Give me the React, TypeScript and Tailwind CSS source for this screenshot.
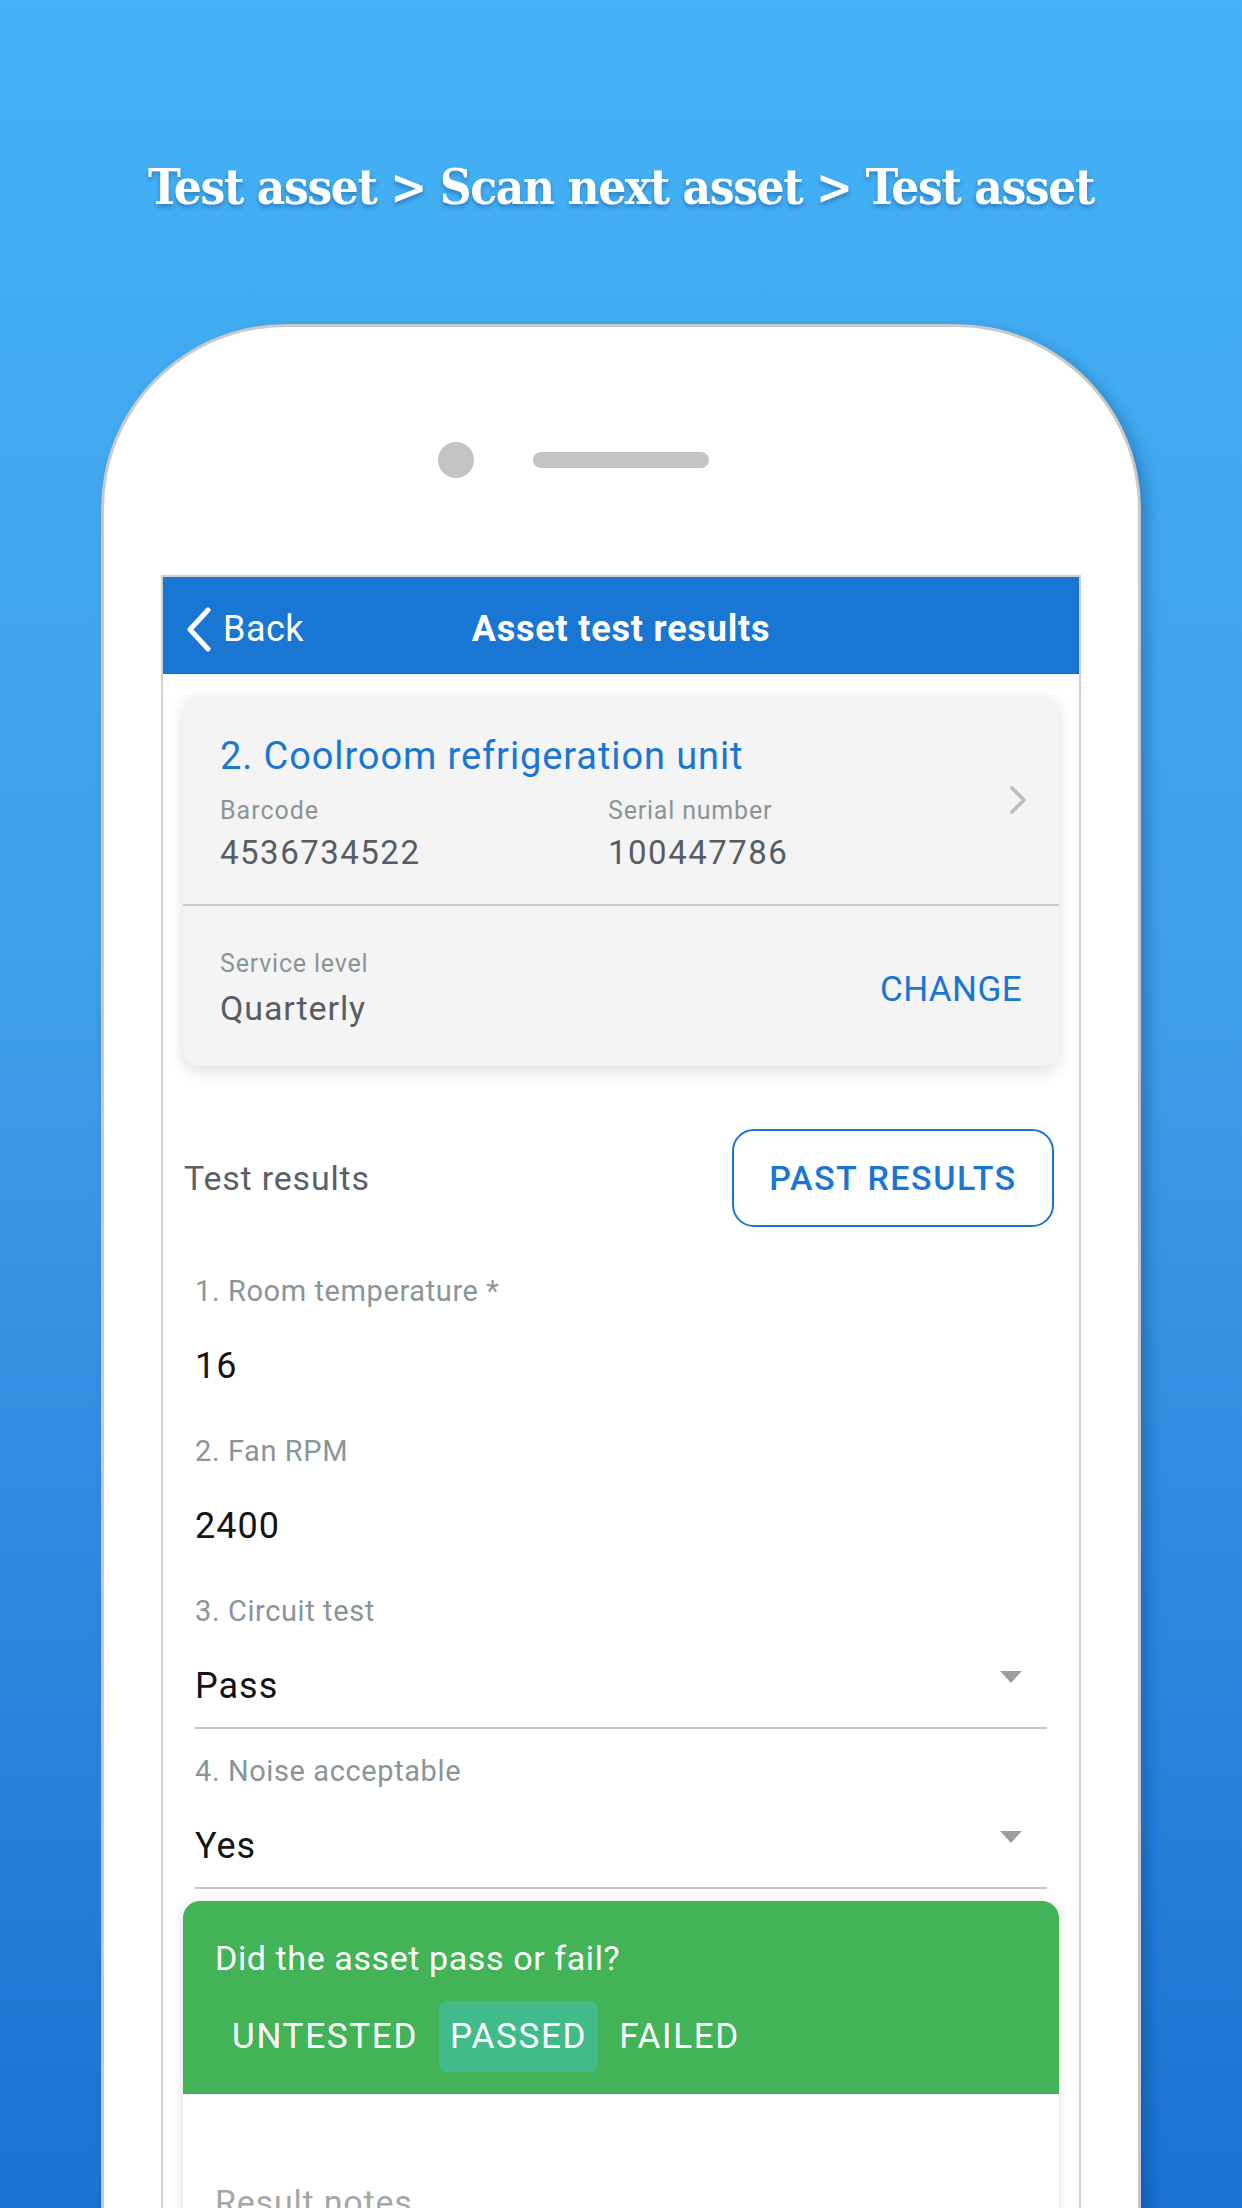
import React from 'react'

const roboto = { fontFamily: 'Roboto, "Noto Sans", "Liberation Sans", sans-serif' }

function BackChevron() {
  return (
    <svg width="27" height="45" viewBox="0 0 27 45" fill="none">
      <path d="M23 3 L5 22.5 L23 42" stroke="white" strokeWidth="5" strokeLinecap="round" strokeLinejoin="round" />
    </svg>
  )
}

function RightChevron() {
  return (
    <svg width="18" height="30" viewBox="0 0 18 30" fill="none">
      <path d="M3 3 L15 15 L3 27" stroke="#bdbdbd" strokeWidth="3.5" strokeLinecap="round" strokeLinejoin="round" />
    </svg>
  )
}

function Caret() {
  return (
    <svg width="22" height="12" viewBox="0 0 22 12">
      <path d="M0 0 H22 L11 12 Z" fill="#9e9e9e" />
    </svg>
  )
}

type Field = { label: string; value: string; select?: boolean }

const fields: Field[] = [
  { label: '1. Room temperature *', value: '16' },
  { label: '2. Fan RPM', value: '2400' },
  { label: '3. Circuit test', value: 'Pass', select: true },
  { label: '4. Noise acceptable', value: 'Yes', select: true },
]

function FieldRow({ field }: { field: Field }) {
  return (
    <div className="flex flex-col">
      <div className="text-[29px] leading-[34px] tracking-[0.6px] text-[#8a9598]">{field.label}</div>
      <div className="mt-[37px] flex items-center justify-between">
        <span className="text-[36px] leading-[42px] tracking-[1px] text-[#141414]">{field.value}</span>
        {field.select && (
          <span className="mr-[25px] -mt-[18px]">
            <Caret />
          </span>
        )}
      </div>
      <div className={`mt-[20px] h-[2px] ${field.select ? 'bg-[#c6c6c6]' : 'bg-transparent'}`} />
    </div>
  )
}

export default function App() {
  return (
    <div
      className="w-[1242px] h-[2208px] overflow-hidden bg-[linear-gradient(180deg,#43b2f6_0%,#3f9ee8_45%,#1a72d2_100%)]"
      style={roboto}
    >
      {/* Headline */}
      <h1
        className="pt-[157px] text-center text-[49px] leading-[60px] font-bold text-white tracking-[-1.4px] [text-shadow:0_3px_4px_rgba(0,40,110,0.35)]"
        style={{ fontFamily: '"DejaVu Serif Condensed", "DejaVu Serif", serif', fontStretch: 'condensed' }}
      >
        Test asset &gt; Scan next asset &gt; Test asset
      </h1>

      {/* Phone */}
      <div className="mx-auto mt-[107px] w-[1040px] h-[1900px] rounded-t-[185px] border-[3px] border-b-0 border-[#c9c9c9] bg-white shadow-[8px_6px_14px_rgba(0,30,90,0.25)]">
        <div className="mt-[115px] grid grid-cols-[1fr_auto_1fr] items-center">
          <div className="flex justify-end pr-[59px]">
            <div className="h-[36px] w-[36px] rounded-full bg-[#c4c4c4]" />
          </div>
          <div className="h-[16px] w-[176px] rounded-full bg-[#c4c4c4]" />
          <div />
        </div>

        {/* Screen */}
        <div className="mx-auto mt-[97px] w-[920px] h-[1700px] border-[2px] border-b-0 border-[#d0d0d0] bg-white">
          {/* Nav bar */}
          <div className="grid h-[96px] grid-cols-[1fr_auto_1fr] items-center bg-[#1976d2] pt-[8px] text-white shadow-[0_1px_0_#1565c0]">
            <div className="flex items-center pl-[22px]">
              <BackChevron />
              <span className="ml-[11px] text-[36px] tracking-[0.5px]">Back</span>
            </div>
            <div className="text-[36px] font-bold tracking-[0.8px]">Asset test results</div>
            <div />
          </div>

          <div className="px-[20px]">
            {/* Asset card */}
            <div className="mt-[23px] rounded-[14px] bg-[#f4f4f4] shadow-[0_5px_16px_rgba(0,0,0,0.13)]">
              <div className="flex items-center pl-[37px] pr-[32px] pt-[37px] pb-[31px]">
                <div className="flex-1">
                  <div className="text-[38px] leading-[46px] tracking-[0.9px] text-[#1976d2]">2. Coolroom refrigeration unit</div>
                  <div className="mt-[17px] flex">
                    <div className="w-[388px]">
                      <div className="text-[25px] leading-[30px] tracking-[1px] text-[#8a9598]">Barcode</div>
                      <div className="mt-[7px] text-[33px] leading-[40px] tracking-[1.5px] text-[#575d62]">4536734522</div>
                    </div>
                    <div>
                      <div className="text-[25px] leading-[30px] tracking-[0.8px] text-[#8a9598]">Serial number</div>
                      <div className="mt-[7px] text-[33px] leading-[40px] tracking-[1.5px] text-[#575d62]">100447786</div>
                    </div>
                  </div>
                </div>
                <span className="-mt-[6px]">
                  <RightChevron />
                </span>
              </div>
              <div className="h-[2px] bg-[#c8c8c8]" />
              <div className="flex items-center justify-between pl-[37px] pr-[37px] pt-[43px] pb-[38px]">
                <div>
                  <div className="text-[25px] leading-[30px] tracking-[0.8px] text-[#8a9598]">Service level</div>
                  <div className="mt-[9px] text-[34px] leading-[40px] tracking-[0.9px] text-[#575d62]">Quarterly</div>
                </div>
                <div className="mt-[4px] text-[35px] tracking-[0.4px] text-[#1976d2]">CHANGE</div>
              </div>
            </div>

            {/* Test results header */}
            <div className="mt-[63px] flex items-center justify-between pl-[1px] pr-[5px]">
              <span className="text-[34px] tracking-[0.8px] text-[#5a6066]">Test results</span>
              <button className="flex h-[98px] w-[322px] items-center justify-center rounded-[22px] border-2 border-[#1976d2] text-[34px] font-medium tracking-[1.5px] text-[#1976d2]">
                PAST RESULTS
              </button>
            </div>

            {/* Fields */}
            <div className="mt-[47px] flex flex-col gap-[25px] px-[12px]">
              {fields.map((f) => (
                <FieldRow key={f.label} field={f} />
              ))}
            </div>

            {/* Pass / fail */}
            <div className="mt-[12px] overflow-hidden rounded-t-[17px] bg-white shadow-[0_2px_12px_rgba(0,0,0,0.14)]">
              <div className="bg-[#43b357] pt-[37px] pb-[22px]">
                <div className="pl-[32px] text-[34px] leading-[40px] tracking-[0.6px] text-white">Did the asset pass or fail?</div>
                <div className="mt-[23px] flex gap-[10px] pl-[38px]">
                  <span className="h-[71px] rounded-[8px] px-[11px] text-[35px] leading-[71px] tracking-[1.7px] text-white">UNTESTED</span>
                  <span className="h-[71px] rounded-[8px] bg-[#41bb8a] px-[11px] text-[35px] leading-[71px] tracking-[1.7px] text-white">PASSED</span>
                  <span className="h-[71px] rounded-[8px] px-[11px] text-[35px] leading-[71px] tracking-[1.7px] text-white">FAILED</span>
                </div>
              </div>
              <div className="h-[300px] pl-[32px] pt-[88px]">
                <span className="text-[34px] leading-[40px] tracking-[0.8px] text-[#a6a6a6]">Result notes</span>
              </div>
            </div>
          </div>
        </div>
      </div>
    </div>
  )
}
